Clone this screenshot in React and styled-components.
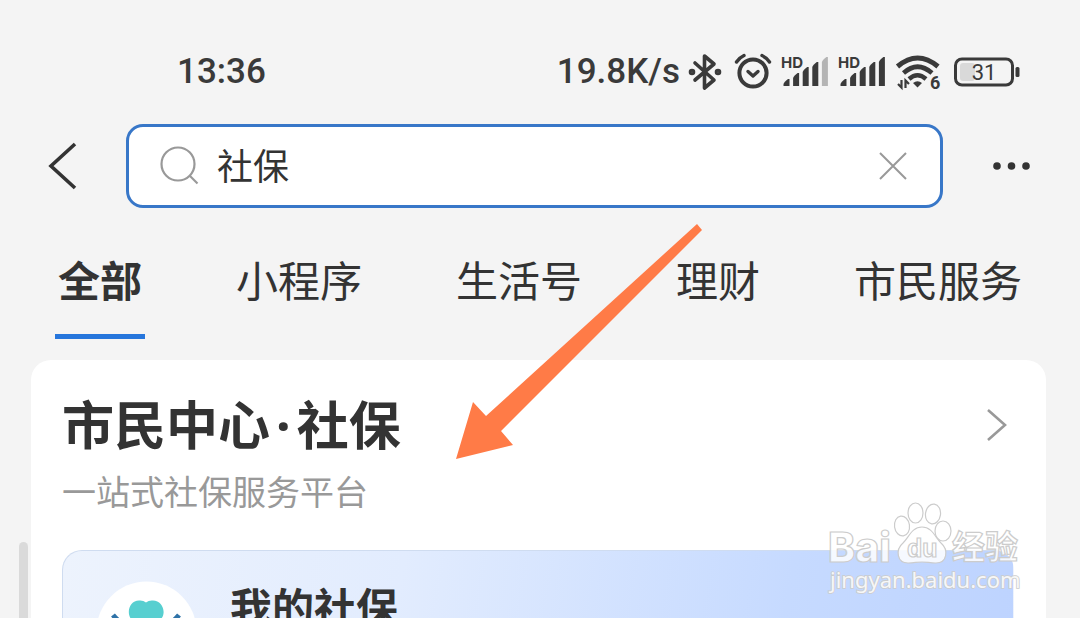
import React from "react";
import styled, { createGlobalStyle } from "styled-components";

const GlobalStyle = createGlobalStyle`
  *, *::before, *::after { box-sizing: border-box; }
  body {
    margin: 0;
    background: #f4f4f4;
    color: #333;
    font-family: "Noto Sans CJK SC", sans-serif;
  }
  button, input { font: inherit; color: inherit; }
`;

const Page = styled.div`
  position: relative;
  display: flex;
  flex-direction: column;
  height: 100vh;
  overflow: hidden;
`;

const StatusBar = styled.header`
  display: flex;
  align-items: center;
  justify-content: space-between;
  padding: 46px 60px 26px 177px;
  font-family: Roboto, "Noto Sans CJK SC", sans-serif;
  font-size: 35px;
  font-weight: 500;
  line-height: 52px;
  color: #3a3a3a;
`;

const StatusItems = styled.div`
  display: flex;
  align-items: center;
  gap: 8px;
`;

const Icon = styled.svg`
  display: block;
  flex: none;
  overflow: visible;
`;

const SearchRow = styled.div`
  display: flex;
  align-items: center;
  gap: 48px;
  padding: 0 48px;
`;

const IconButton = styled.button`
  flex: none;
  display: flex;
  padding: 0;
  border: 0;
  background: none;
  cursor: pointer;
`;

const SearchBox = styled.form`
  flex: 1;
  min-width: 0;
  display: flex;
  align-items: center;
  gap: 17px;
  height: 84px;
  padding: 0 32px 0 31px;
  background: #fff;
  border: 3px solid #3877c8;
  border-radius: 17px;
`;

const SearchInput = styled.input`
  flex: 1;
  min-width: 0;
  padding: 0 0 4px;
  border: 0;
  outline: 0;
  background: none;
  font-size: 36px;
  line-height: 52px;
`;

const Tabs = styled.nav`
  display: flex;
  justify-content: space-between;
  margin-top: 44px;
  padding: 0 55px;
`;

const Tab = styled.button`
  padding: 0 3px 28px;
  border: 0;
  border-bottom: 5px solid ${(p) => (p.$active ? "#2676dc" : "transparent")};
  background: none;
  font-size: 42px;
  line-height: 54px;
  font-weight: ${(p) => (p.$active ? 700 : 400)};
  white-space: nowrap;
  cursor: pointer;
`;

const Card = styled.section`
  flex: 1 0 auto;
  margin: 21px 34px 0 31px;
  padding: 30px 32px 0 31px;
  background: #fff;
  border-radius: 20px 20px 0 0;
`;

const CardHead = styled.div`
  display: flex;
  align-items: center;
  justify-content: space-between;
  padding-right: 6px;
`;

const Title = styled.h1`
  margin: 0;
  padding-bottom: 4px;
  font-size: 52px;
  line-height: 66px;
  font-weight: 700;
`;

const Dot = styled.span`
  margin: 0 6px;
  font-family: "Noto Sans", sans-serif;
  line-height: 1;
`;

const Subtitle = styled.p`
  margin: 8px 0 36px;
  font-size: 34px;
  line-height: 46px;
  color: #999;
`;

const Banner = styled.a`
  display: flex;
  align-items: flex-start;
  gap: 33px;
  height: 160px;
  padding: 30px 33px;
  border: 1px solid #cfdcf0;
  border-right-color: transparent;
  border-radius: 20px;
  background: linear-gradient(100deg, #edf3fd 0%, #e2ecfe 35%, #c6daff 75%, #bdd3ff 100%);
  color: inherit;
  text-decoration: none;
`;

const BannerTitle = styled.span`
  font-size: 42px;
  line-height: 50px;
  font-weight: 700;
`;

const ScrollThumb = styled.span`
  position: absolute;
  left: 19px;
  top: 542px;
  bottom: 0;
  width: 9px;
  border-radius: 5px 5px 0 0;
  background: #dadada;
`;

const Pointer = styled.svg`
  position: absolute;
  left: 456px;
  top: 224px;
  pointer-events: none;
`;

const Watermark = styled.svg`
  position: absolute;
  right: 52px;
  top: 498px;
  overflow: visible;
  pointer-events: none;
`;

const tabs = ["全部", "小程序", "生活号", "理财", "市民服务"];

function Bluetooth() {
  return (
    <Icon width="37" height="38" viewBox="0 0 37 38" fill="none" stroke="#3a3a3a" strokeWidth="3.6" strokeLinecap="round" strokeLinejoin="round">
      <path d="M7 10 L26 27 L16.5 35 V3 L26 11 L7 27" />
      <circle cx="4" cy="19" r="1.5" />
      <circle cx="30" cy="19" r="1.5" />
    </Icon>
  );
}

function Alarm() {
  return (
    <Icon width="40" height="38" viewBox="0 0 40 38" fill="none" stroke="#3a3a3a" strokeLinecap="round" strokeLinejoin="round">
      <circle cx="20" cy="20" r="13.6" strokeWidth="4" />
      <path d="M15 18.5 L20 23 L25 18.5" strokeWidth="3.4" />
      <path d="M3.5 9 Q6.5 4.5 11 2.5 M29 2.5 Q33.5 4.5 36.5 9" strokeWidth="3.4" />
    </Icon>
  );
}

function Signal({ level }) {
  const tops = [26, 20, 14, 9, 4];
  return (
    <Icon width="49" height="38" viewBox="0 0 49 38" fill="#3a3a3a">
      <text x="0" y="15" fontFamily="Inter, sans-serif" fontWeight="700" fontSize="15">HD</text>
      {tops.map((t, i) => (
        <path
          key={t}
          d={`M${2.5 + i * 9.6} ${t + 5} Q${3 + i * 9.6} ${t + 3} ${7 + i * 9.6} ${t} h1.5 V33 h-6 Z`}
          fill={i < level ? "#3a3a3a" : "#b4b4b4"}
        />
      ))}
    </Icon>
  );
}

function Wifi() {
  return (
    <Icon width="49" height="38" viewBox="0 0 49 38" fill="none" stroke="#3a3a3a">
      <path d="M2.5 13.5 Q22.5 -3.5 43 13.5" strokeWidth="5" />
      <path d="M8.5 20 Q22.5 7.5 37 20" strokeWidth="4.6" />
      <path d="M14 26 Q22.5 18.5 31 26" strokeWidth="4.4" />
      <path d="M18 30 Q22.5 26.5 27 30 L22.5 34.5 Z" fill="#3a3a3a" stroke="none" />
      <path d="M6.5 27 V34.5 L3 31 M10.5 35 V27.5 L14 31" strokeWidth="2.2" />
      <text x="35" y="35.5" fill="#3a3a3a" stroke="none" fontFamily="Roboto, sans-serif" fontWeight="700" fontSize="18">6</text>
    </Icon>
  );
}

function Battery() {
  return (
    <Icon width="68" height="38" viewBox="0 0 68 38" role="img" aria-label="31%">
      <rect x="3.5" y="6" width="57" height="26" rx="6.5" fill="none" stroke="#3a3a3a" strokeWidth="3" />
      <rect x="8" y="10" width="15" height="18" rx="3" fill="#d9d9d9" />
      <rect x="63.5" y="14" width="4" height="10" rx="1.5" fill="#3a3a3a" />
      <text x="32" y="27" textAnchor="middle" fill="#3a3a3a" fontFamily="Roboto, sans-serif" fontWeight="400" fontSize="22">31</text>
    </Icon>
  );
}

function Avatar() {
  return (
    <Icon width="101" height="101" viewBox="0 0 101 101">
      <circle cx="50.5" cy="50.5" r="50" fill="#fff" />
      <path d="M50 55 L35 38 C30 31 34 19.5 43 19.5 Q47 19 50 21.5 Q53 19 57 19.5 C66 19.5 71 31 65 38 Z" fill="#57cfd0" />
      <path d="M17 34 Q22 40 34 50 L46 66 M83 34 Q78 40 66 50 L54 66" fill="none" stroke="#2f73a8" strokeWidth="5" />
    </Icon>
  );
}

export default function App() {
  return (
    <Page>
      <GlobalStyle />
      <StatusBar>
        <span>13:36</span>
        <StatusItems>
          <span>19.8K/s</span>
          <Bluetooth />
          <Alarm />
          <Signal level={4} />
          <Signal level={5} />
          <Wifi />
          <Battery />
        </StatusItems>
      </StatusBar>

      <SearchRow>
        <IconButton type="button" aria-label="返回">
          <Icon width="30" height="48" viewBox="0 0 30 48" fill="none" stroke="#333" strokeWidth="3.6">
            <path d="M27 2 L3 24 L27 46" />
          </Icon>
        </IconButton>
        <SearchBox role="search" onSubmit={(e) => e.preventDefault()}>
          <Icon width="40" height="40" viewBox="0 0 40 40" fill="none" stroke="#999" strokeWidth="2.2">
            <circle cx="18" cy="18" r="16.5" />
            <path d="M29.5 29.5 L37.5 37.5" />
          </Icon>
          <SearchInput aria-label="搜索" defaultValue="社保" />
          <IconButton type="reset" aria-label="清除">
            <Icon width="30" height="30" viewBox="0 0 30 30" fill="none" stroke="#999" strokeWidth="2">
              <path d="M2 2 L28 28 M28 2 L2 28" />
            </Icon>
          </IconButton>
        </SearchBox>
        <IconButton type="button" aria-label="更多">
          <Icon width="41" height="10" viewBox="0 0 41 10" fill="#333">
            <circle cx="6" cy="5" r="3.8" />
            <circle cx="20.5" cy="5" r="3.8" />
            <circle cx="35" cy="5" r="3.8" />
          </Icon>
        </IconButton>
      </SearchRow>

      <Tabs>
        {tabs.map((name, i) => (
          <Tab key={name} type="button" $active={i === 0}>{name}</Tab>
        ))}
      </Tabs>

      <Card>
        <CardHead>
          <Title>市民中心<Dot>·</Dot>社保</Title>
          <IconButton type="button" aria-label="进入市民中心">
            <Icon width="22" height="34" viewBox="0 0 22 34" fill="none" stroke="#999" strokeWidth="2.6">
              <path d="M2 2 L19 17 L2 32" />
            </Icon>
          </IconButton>
        </CardHead>
        <Subtitle>一站式社保服务平台</Subtitle>
        <Banner href="#my">
          <Avatar />
          <BannerTitle>我的社保</BannerTitle>
        </Banner>
      </Card>

      <ScrollThumb />

      <Pointer width="248" height="236" viewBox="0 0 248 236" aria-hidden="true">
        <path d="M0 235 L17 178 L30 192 L241 0 L246 6 L45 207 L57 221 Z" fill="#ff7b47" />
      </Pointer>

      <Watermark width="200" height="100" viewBox="0 0 200 100" fill="#fff" fillOpacity="0.85" stroke="#cccccc" strokeWidth="1.2">
        <text x="0" y="64" fontFamily="Inter, sans-serif" fontWeight="800" fontSize="41">Bai</text>
        <ellipse cx="74" cy="28" rx="7.5" ry="10" transform="rotate(-8 74 28)" />
        <ellipse cx="87.5" cy="15" rx="7.5" ry="10" />
        <ellipse cx="105" cy="16" rx="7.5" ry="10" transform="rotate(8 105 16)" />
        <ellipse cx="115" cy="33" rx="8" ry="10" />
        <path d="M94 29 C104 29 107 39 113 45 C121 52 119 65 108 65 C102 65 99 64 94 64 C89 64 86 65 80 65 C69 65 67 52 75 45 C81 39 84 29 94 29 Z" />
        <text x="79" y="59" fontFamily="Liberation Sans, sans-serif" fontWeight="700" fontSize="25">du</text>
        <text x="124" y="61" fontFamily="Noto Sans CJK SC, sans-serif" fontWeight="700" fontSize="33">经验</text>
        <text x="2" y="90" fontFamily="Noto Sans, sans-serif" fontSize="22" paintOrder="stroke" strokeWidth="1.6">jingyan.baidu.com</text>
      </Watermark>
    </Page>
  );
}
